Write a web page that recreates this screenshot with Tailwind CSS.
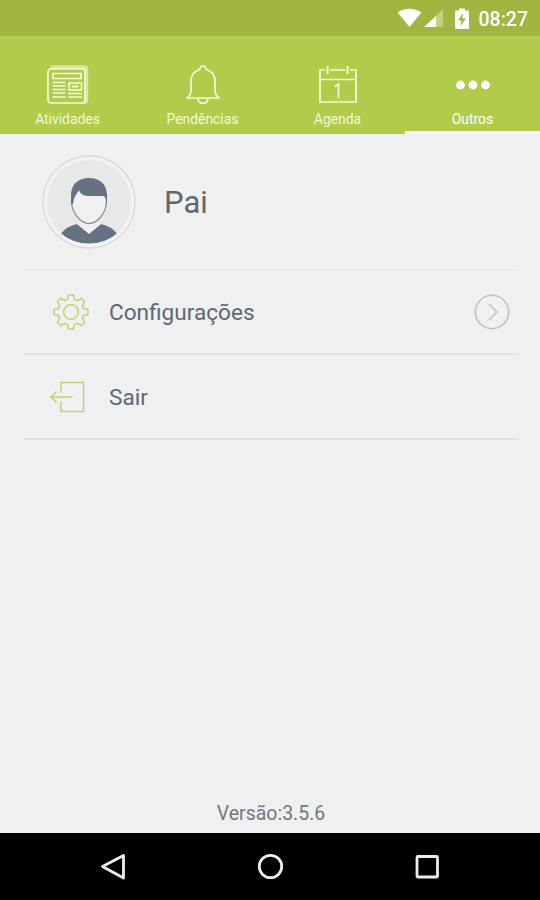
<!DOCTYPE html>
<html lang="pt-BR">
<head>
  <meta charset="UTF-8" />
  <meta name="viewport" content="width=device-width, initial-scale=1.0"/>
  <title>Outros</title>
  <script src="https://cdn.jsdelivr.net/npm/@tailwindcss/browser@4"></script>
</head>
<body class="bg-[#eef0f2] font-[Roboto,sans-serif]">
  <div class="flex flex-col w-[540px] h-[900px] overflow-hidden">

    <!-- Status bar -->
    <div class="flex items-center justify-end h-9 shrink-0 bg-[#a1b541] pr-3 text-white">
      <svg class="w-[25px] h-5 mr-[2px]" viewBox="0 0 25 20" fill="currentColor"><path d="M0.500 4.500Q12.500-3 24.500 4.500L12.500 19Z"/></svg>
      <svg class="w-5 h-5 mr-[11px]" viewBox="0 0 20 20" fill="currentColor"><path d="M0 19L19 1V19Z" opacity=".35"/><path d="M0 19L12 8V19Z"/></svg>
      <svg class="w-[14px] h-[21px] mr-[10px]" viewBox="0 0 14 21"><path fill="currentColor" d="M4 0.500h6v2h3q1 0 1 1V20q0 1-1 1H1q-1 0-1-1V3.500q0-1 1-1h3z"/><path fill="#a1b541" d="M8 5L3 12.500h3.500L5.500 18 11 10.500H7.500Z"/></svg>
      <span class="text-[19.5px] font-medium leading-5 pt-1">08:27</span>
    </div>

    <!-- Tabs -->
    <div class="grid grid-cols-4 h-[98px] shrink-0 bg-[#b1cb4a] text-[#f5f9dc] text-[13.9px]">
      <div class="flex flex-col items-center pt-7">
        <svg class="w-11 h-[42px]" viewBox="0 0 44 42" fill="none" stroke="currentColor" stroke-width="1.600">
          <path d="M4.500 3H38q2.500 0 2.500 2.500V36q0 2.500-2.500 2.500" stroke-width="3.500" opacity=".6"/>
          <rect x="2" y="5" width="37" height="34" rx="3"/>
          <rect x="7" y="9.500" width="28" height="5"/>
          <path d="M6.500 18.500h13M6.500 22h13M6.500 25.500h13M6.500 29h13M6.500 33h13M22 29.500h14M22 33h14"/>
          <rect x="23" y="19" width="12.500" height="7"/>
          <path d="M25.500 22.500h7" stroke-width="2"/>
        </svg>
        <span class="mt-1 leading-[18px]">Atividades</span>
      </div>
      <div class="flex flex-col items-center pt-7">
        <svg class="w-9 h-[42px]" viewBox="0 0 36 42" fill="none" stroke="currentColor" stroke-width="1.700" stroke-linejoin="round">
          <path d="M15 5.500C14.500 1 21.500 1 21 5.500C27 7 30 11 30 17V26Q30 31 34 34H2Q6 31 6 26V17C6 11 9 7 15 5.500Z"/>
          <path d="M13 34.500C13.500 41 22.500 41 23 34.500"/>
        </svg>
        <span class="mt-1 leading-[18px]">Pendências</span>
      </div>
      <div class="flex flex-col items-center pt-7">
        <svg class="w-10 h-[42px]" viewBox="0 0 40 42" fill="none" stroke="currentColor" stroke-width="1.700">
          <path d="M7 6H2V38H38V6H32M12 6H27M2 15.500H38"/>
          <path d="M9.500 2V10M29.500 2V10" stroke-width="2"/>
          <path d="M17 22.500L20.500 20V34" stroke-width="1.800"/>
        </svg>
        <span class="mt-1 leading-[18px]">Agenda</span>
      </div>
      <div class="flex flex-col items-center pt-7 border-b-[3px] border-white text-white">
        <svg class="w-9 h-[42px]" viewBox="0 0 36 42" fill="currentColor"><circle cx="5.500" cy="21" r="4.400"/><circle cx="18" cy="21" r="4.400"/><circle cx="30.500" cy="21" r="4.400"/></svg>
        <span class="mt-1 leading-[18px]">Outros</span>
      </div>
    </div>

    <!-- Content -->
    <div class="flex flex-col flex-1 pl-6 pr-[22px] text-[#5f6773]">
      <div class="flex items-center h-[136px] border-b border-[#e5e7e9] pl-[18px]">
        <svg class="w-[94px] h-[94px]" viewBox="0 0 94 94">
          <defs><clipPath id="face"><circle cx="47" cy="47" r="42"/></clipPath></defs>
          <circle cx="47" cy="47" r="46" fill="#f1f2f4" stroke="#d8d9dc" stroke-width="1.300"/>
          <circle cx="47" cy="47" r="42" fill="#e6e8ea"/>
          <path clip-path="url(#face)" fill="#677181" d="M18.500 79Q25 71 35 69L47 79 59 69Q69 71 75.500 79Q63 88.500 47 88.500T18.500 79Z"/>
          <path fill="#eef0f1" d="M35 69L39 65H55L59 69 47 78.500Z"/>
          <path fill="#eef0f1" d="M30 49L34 32H60L64 49C63 59 55 68.500 47 68.500S31 59 30 49Z"/>
          <path fill="none" stroke="#8f928f" stroke-width="1.300" d="M29.700 46V49C31 59 39 68.500 47 68.500S63 59 64.300 49V46"/>
          <path fill="#677181" d="M29 49V39C30 28 37 23 47 23S64 28 65 39V49L63 42Q62 41 60 41H46Q39 40.500 37 35.500Q32 41 31 49Z"/>
        </svg>
        <span class="ml-7 text-[31px] leading-9 pt-[3px]">Pai</span>
      </div>
      <div class="flex items-center h-[85px] border-b-2 border-[#e1e3e5] pl-[29px] pr-2">
        <svg class="w-9 h-9" viewBox="-18 -18 36 36" fill="none" stroke="#c0d26c" stroke-width="1.500" stroke-linejoin="round">
          <path d="M-3.400-12.600L-2.400-17H2.400L3.400-12.600L6.500-11.300L10.300-13.700L13.700-10.300L11.300-6.500L12.600-3.400L17-2.400V2.400L12.600 3.400L11.300 6.500L13.700 10.300L10.300 13.700L6.500 11.300L3.400 12.600L2.400 17H-2.400L-3.400 12.600L-6.500 11.300L-10.300 13.700L-13.700 10.300L-11.300 6.500L-12.600 3.400L-17 2.400V-2.400L-12.600-3.400L-11.300-6.500L-13.700-10.300L-10.300-13.700L-6.500-11.300Z"/>
          <circle r="7.300"/>
        </svg>
        <span class="ml-5 text-[22.6px] leading-7 pt-[3px]">Configurações</span>
        <svg class="ml-auto w-9 h-9" viewBox="0 0 36 36" fill="none" stroke="#bfc1c3" stroke-width="1.600"><circle cx="18" cy="18" r="16.700"/><path d="M15 10L23 18L15 26"/></svg>
      </div>
      <div class="flex items-center h-[85px] border-b-2 border-[#e1e3e5] pl-[26px]">
        <svg class="w-[35px] h-8" viewBox="0 0 35 32" fill="none" stroke="#c0d26c" stroke-width="1.400">
          <path d="M11 11.500V1.500H33.500V30.500H11V20.500"/><path d="M22.500 16H1M6.500 10.500L1 16L6.500 21.500"/>
        </svg>
        <span class="ml-6 text-[22.6px] leading-7 pt-[3px]">Sair</span>
      </div>
      <div class="mt-auto mb-[7px] text-center text-[19.5px] leading-6 text-[#74777b]">Versão:3.5.6</div>
    </div>

    <!-- Navigation bar -->
    <div class="flex items-center justify-between h-[67px] shrink-0 bg-black pl-[100px] pr-[99px]">
      <svg class="w-7 h-7" viewBox="0 0 28 28" fill="none" stroke="#eee" stroke-width="2.800" stroke-linejoin="round"><path d="M2.500 13.500L23.500 2.500V25Z"/></svg>
      <svg class="w-7 h-7" viewBox="0 0 28 28" fill="none" stroke="#eee" stroke-width="2.800"><circle cx="13.500" cy="13.500" r="11.200"/></svg>
      <svg class="w-7 h-7" viewBox="0 0 28 28" fill="none" stroke="#eee" stroke-width="2.800"><rect x="4" y="3.500" width="20.500" height="20.500" rx="1"/></svg>
    </div>
  </div>
</body>
</html>
